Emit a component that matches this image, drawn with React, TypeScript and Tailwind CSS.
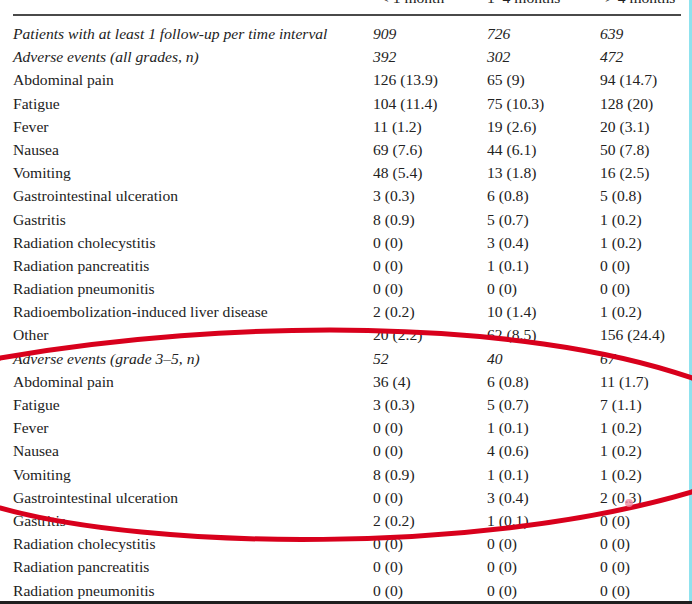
import React from 'react';

type Row = {
  label: string;
  values: [string, string, string];
  italic?: boolean;
};

const rows: Row[] = [
  { label: 'Patients with at least 1 follow-up per time interval', values: ['909', '726', '639'], italic: true },
  { label: 'Adverse events (all grades, n)', values: ['392', '302', '472'], italic: true },
  { label: 'Abdominal pain', values: ['126 (13.9)', '65 (9)', '94 (14.7)'] },
  { label: 'Fatigue', values: ['104 (11.4)', '75 (10.3)', '128 (20)'] },
  { label: 'Fever', values: ['11 (1.2)', '19 (2.6)', '20 (3.1)'] },
  { label: 'Nausea', values: ['69 (7.6)', '44 (6.1)', '50 (7.8)'] },
  { label: 'Vomiting', values: ['48 (5.4)', '13 (1.8)', '16 (2.5)'] },
  { label: 'Gastrointestinal ulceration', values: ['3 (0.3)', '6 (0.8)', '5 (0.8)'] },
  { label: 'Gastritis', values: ['8 (0.9)', '5 (0.7)', '1 (0.2)'] },
  { label: 'Radiation cholecystitis', values: ['0 (0)', '3 (0.4)', '1 (0.2)'] },
  { label: 'Radiation pancreatitis', values: ['0 (0)', '1 (0.1)', '0 (0)'] },
  { label: 'Radiation pneumonitis', values: ['0 (0)', '0 (0)', '0 (0)'] },
  { label: 'Radioembolization-induced liver disease', values: ['2 (0.2)', '10 (1.4)', '1 (0.2)'] },
  { label: 'Other', values: ['20 (2.2)', '62 (8.5)', '156 (24.4)'] },
  { label: 'Adverse events (grade 3–5, n)', values: ['52', '40', '67'], italic: true },
  { label: 'Abdominal pain', values: ['36 (4)', '6 (0.8)', '11 (1.7)'] },
  { label: 'Fatigue', values: ['3 (0.3)', '5 (0.7)', '7 (1.1)'] },
  { label: 'Fever', values: ['0 (0)', '1 (0.1)', '1 (0.2)'] },
  { label: 'Nausea', values: ['0 (0)', '4 (0.6)', '1 (0.2)'] },
  { label: 'Vomiting', values: ['8 (0.9)', '1 (0.1)', '1 (0.2)'] },
  { label: 'Gastrointestinal ulceration', values: ['0 (0)', '3 (0.4)', '2 (0.3)'] },
  { label: 'Gastritis', values: ['2 (0.2)', '1 (0.1)', '0 (0)'] },
  { label: 'Radiation cholecystitis', values: ['0 (0)', '0 (0)', '0 (0)'] },
  { label: 'Radiation pancreatitis', values: ['0 (0)', '0 (0)', '0 (0)'] },
  { label: 'Radiation pneumonitis', values: ['0 (0)', '0 (0)', '0 (0)'] },
];

const gridCols = 'grid grid-cols-[360px_114px_113px_1fr] pl-[13px]';

const App: React.FC = () => {
  return (
    <div className="relative w-[692px] h-[604px] overflow-hidden bg-white font-['Liberation_Serif',serif] text-[15.6px] text-[#222]">
      <div className="h-[601px] border-r-[3px] border-[#8fe2ee] overflow-hidden">
        {/* header row, mostly scrolled out of view */}
        <div className={`${gridCols} -mt-[10px] h-[16px] items-end leading-none`}>
          <span />
          <span className="pl-[7px]">&lt; 1 month</span>
          <span>1–4 months</span>
          <span className="pl-[5px]">&gt; 4 months</span>
        </div>
        <div className="ml-[13px] mr-[8px] mt-[8px] h-[2px] bg-[#4a4a4a]" />

        <div className="mt-[6px]">
          {rows.map((row, i) => (
            <div key={i} className={`${gridCols} h-[23.2px] items-center ${row.italic ? 'italic' : ''}`}>
              <span className="whitespace-nowrap">{row.label}</span>
              {row.values.map((v, j) => (
                <span key={j} className="whitespace-nowrap">{v}</span>
              ))}
            </div>
          ))}
        </div>
      </div>
      <div className="h-[3px] bg-[#1f1f1f]" />

      {/* red hand-drawn ellipse */}
      <svg className="absolute inset-0 pointer-events-none" width="692" height="604" viewBox="0 0 692 604">
        <path
          d="M -20 364 C 0 360, 0 358, 0 358 C 230 318, 520 318, 692 378 C 720 390, 730 470, 692 492 C 480 555, 150 550, 0 508 C -30 500, -40 370, -20 364 Z"
          fill="none"
          stroke="#d8001c"
          strokeWidth="5"
          strokeLinecap="round"
        />
        <circle cx="629" cy="503" r="4" fill="#f08aa0" opacity="0.8" />
      </svg>
    </div>
  );
};

export default App;
